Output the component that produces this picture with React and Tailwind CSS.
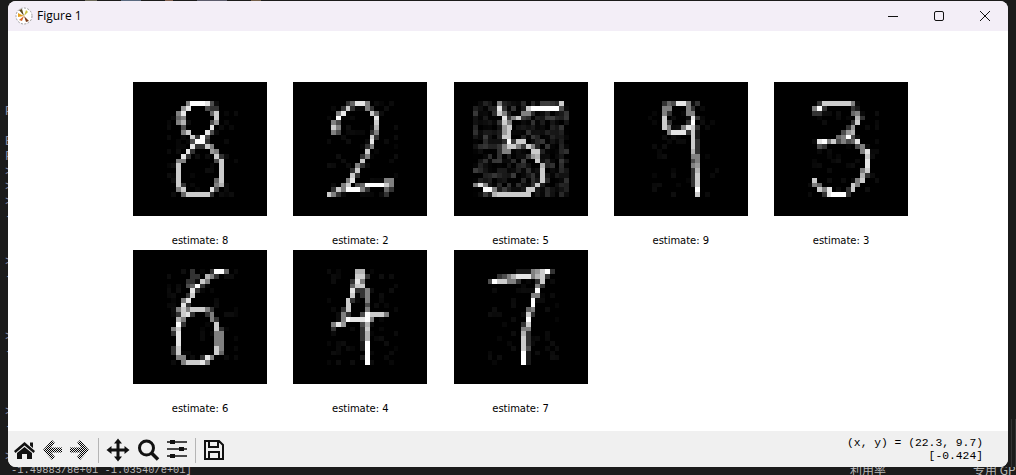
const digits = [
  {
    label: "8",
    rows: `4 11 5aaa97 16 3
5 10 6 11 9 15 3 16 2 17 2
6 9 5 10 9 16 4 17 8
7 9 4 10 5 17 8
8 9 5 10 7 16 3 17 6
9 10 3 16 9
10 10 5 11 8 15 9 16 3
11 12 8 13 2 14 a 15 3
12 12 3 13 a 14 a 15 2
13 12 9 13 2 14 2 15 8 16 5
14 11 9 12 2 16 6 17 5
15 10 9 11 2 17 8 18 2
16 9 5 10 5 17 3 18 8
17 9 8 18 8
18 9 8 18 8
19 9 8 18 8
20 9 8 17 4 18 8
21 9 8 10 2 17 5 18 7
22 9 5 10 8 16 9 17 3
23 10 4 11 88888 16 2`,
  },
  {
    label: "2",
    rows: `4 11 2 12 4 13 99 15 5
5 10 2 11 8 12 2 15 5 16 2
6 9 5 10 9 16 8 17 4
7 9 a 17 9
8 8 5 9 3 17 8
9 8 8 9 5 17 7
10 8 5 9 3 16 2 17 5
11 16 8 17 2
12 16 9
13 15 2 16 5
14 15 8
15 14 2 15 5
16 14 8
17 13 5 14 2
18 12 2 13 8
19 12 8 13 2
20 11 5 12 9 19 5 20 5
21 10 5 11 8 13 3 14 4 15 a 16 aa 18 a 19 8 20 5
22 8 2 9 8 10 5 11 aaa 14 5 15 2 19 4 20 2
23 7 8 8 5 9 2 19 2`,
  },
  {
    label: "5",
    rows: `4 9 5 22 8
5 9 9 15 8 16 aaaaaa 22 3
6 9 8 10 5 14 5 15 5
7 10 9 11 2 12 5 13 8
8 10 8 11 5
9 10 6 11 8
10 10 6 11 8
11 10 8 11 8
12 11 a 13 88
13 10 5 11 8 12 8 13 5 15 8 16 5
14 10 5 11 5 16 88
15 16 6 17 7
16 17 8
17 18 7
18 18 8
19 18 8
20 18 8
21 4 5 5 9 6 5 17 8
22 6 aa 8 5 15 88
23 8 78888888`,
  },
  {
    label: "9",
    rows: `4 10 2 11 4 12 3 13 99 15 5 17 2
5 10 5 11 5 15 5 16 2
6 10 5 11 2 15 5 16 5
7 10 8 16 9 17 2
8 10 8 11 2 15 2 16 a
9 10 8 11 5 14 5 15 9 16 8 17 2
10 11 5 12 999 15 2 16 8 17 1
11 16 8 17 1
12 16 8 17 2
13 16 8 17 2
14 16 7 17 2
15 16 5 17 5
16 16 3 17 5
17 16 5 17 6
18 16 2 17 7
19 16 2 17 8
20 16 2 17 8
21 16 2 17 8
22 17 a
23 17 8`,
  },
  {
    label: "3",
    rows: `4 9 2 10 8 11 88888 16 5
5 8 5 9 a 10 2 16 2 17 1
6 8 2 9 2 16 4 17 5
7 17 7 18 2
8 16 2 17 8
9 15 2 16 6
10 14 3 15 6 16 7
11 13 4 14 5 15 a 16 3
12 9 9 10 a 11 5 12 8 13 3 14 5 15 3 16 4 17 9
13 9 3 10 2 17 3 18 5
14 18 5 19 9
15 19 8
16 19 9
17 19 9
18 18 5 19 8
19 18 7 19 2
20 8 8 17 5 18 8
21 8 5 9 4 16 8 17 5
22 9 8 10 5 11 9 15 2 16 8
23 10 2 11 9 12 aaa 15 2`,
  },
  {
    label: "6",
    rows: `4 12 2 16 2 17 aa 19 4
5 12 2 13 2 15 7 16 5 17 2
6 11 2 12 2 14 8 15 5
7 11 3 12 4 13 a 14 2
8 12 9 13 2
9 11 2 12 8
10 10 5 11 9
11 10 9 11 2
12 9 5 10 8 11 5 12 888 15 5 16 2
13 9 2 10 8 11 9 12 2 15 2 16 5
14 9 7 10 5 16 5 17 2
15 9 a 10 2 17 8
16 8 5 9 8 17 8 18 2
17 8 2 9 9 17 5 18 5
18 9 9 17 5 18 5
19 9 9 17 5 18 5
20 8 2 9 8 17 8 18 5
21 8 2 9 8 17 8 18 4
22 9 5 10 5 14 2 15 9 16 5
23 10 5 11 888 14 9 15 5`,
  },
  {
    label: "4",
    rows: `4 13 77
5 13 88 15 2
6 12 2 13 9 14 5
7 12 4 13 8 14 8
8 12 9 13 2 14 2 15 5
9 12 8 14 2 15 5
10 11 8 12 2 15 5
11 11 8 15 3
12 10 2 11 8 15 5
13 10 5 11 2 14 3 15 a 16 888 19 5
14 10 5 11 a 12 999 15 a 16 5
15 8 5 9 9 10 6 14 3 15 7
16 8 2 14 2 15 8
17 14 2 15 7
18 14 2 15 7
19 14 1 15 a
20 14 1 15 a
21 15 a
22 14 1 15 a
23 15 a`,
  },
  {
    label: "7",
    rows: `4 13 111 16 5 17 6 18 8 19 a 20 2
5 9 2 10 3 11 5 12 7 13 999 16 5 17 7 18 8 19 2
6 7 3 8 a 9 88 11 5 12 5 13 2 17 2 18 8
7 17 5 18 2
8 17 a
9 16 5 17 5
10 16 a
11 16 a
12 15 4 16 5
13 15 8 16 2
14 15 a
15 14 2 15 8
16 14 5 15 5
17 14 7 15 2
18 14 8 15 2
19 14 8 15 2
20 14 8 15 3
21 14 a 15 1
22 14 a 15 1
23 14 a 15 1`,
  },
];

const leftFragments = ["P", "", "E", "F", ">", ">", ">", "-", "", "", ">", "-", "", "", "", ">", "-", "", "", "", ">", "-", "", ">"];

function parseRows(text) {
  const grid = {};
  text.split("\n").forEach((line) => {
    const parts = line.trim().split(" ");
    const row = Number(parts[0]);
    for (let i = 1; i < parts.length; i += 2) {
      [...parts[i + 1]].forEach((ch, n) => {
        grid[row + "-" + (Number(parts[i]) + n)] = parseInt(ch, 16) * 25.5;
      });
    }
  });
  return grid;
}

// faint reconstruction noise, heavy only on the "5"
function noiseAt(r, c, seed, noisy) {
  const s = Math.sin(r * 12.9898 + c * 78.233 + seed * 3.7) * 43758.5453;
  const h = s - Math.floor(s);
  if (noisy) {
    if (r < 4 || r > 23 || c < 4 || c > 23) return 0;
    return h * h * 62;
  }
  if (r < 4 || r > 23 || c < 7 || c > 21) return 0;
  return h > 0.8 ? 6 + (h - 0.8) * 40 : 0;
}

function Digit({ rows, seed }) {
  const grid = parseRows(rows);
  const cells = [];
  for (let r = 0; r < 28; r++) {
    for (let c = 0; c < 28; c++) {
      const v = Math.round(Math.max(grid[r + "-" + c] || 0, noiseAt(r, c, seed, seed === 2)));
      if (v > 0) cells.push(<rect key={r + "-" + c} x={c} y={r} width="1.02" height="1.02" fill={`rgb(${v},${v},${v})`} />);
    }
  }
  return (
    <svg viewBox="0 0 28 28" shapeRendering="crispEdges" className="block w-[134px] h-[134px] bg-black">
      {cells}
    </svg>
  );
}

function Logo() {
  return (
    <svg viewBox="0 0 18 18" className="w-[18px] h-[18px]">
      <circle cx="9" cy="9" r="8" fill="#fff" stroke="#888" strokeWidth="0.8" strokeDasharray="2 1.4" />
      <path d="M9 9 L4 3 L7 2 Z" fill="#5b4a1f" />
      <path d="M9 9 L3 6 L3 10 Z" fill="#e8a020" />
      <path d="M9 9 L4 13 L7 14 Z" fill="#d9662a" />
      <path d="M9 9 L13 5 L11 3 Z" fill="#c9c040" />
      <path d="M9 9 L14 14 L11 15 Z" fill="#7a3a18" />
    </svg>
  );
}

function DitherArrow({ id, flip }) {
  return (
    <svg viewBox="0 0 24 24" className="w-[24px] h-[24px]">
      <defs>
        <pattern id={id} width="2" height="2" patternUnits="userSpaceOnUse">
          <rect width="1" height="1" fill="#000" />
          <rect x="1" y="1" width="1" height="1" fill="#000" />
        </pattern>
      </defs>
      <path
        d="M3 12 L12 2 L15 5 L11 9.5 H22 V14.5 H11 L15 19 L12 22 Z"
        fill={`url(#${id})`}
        transform={flip ? "translate(24 0) scale(-1 1)" : undefined}
      />
    </svg>
  );
}

export default function App() {
  return (
    <div className="w-[1016px] h-[475px] bg-[#1b1b1b] flex flex-col overflow-hidden">
      <div className="h-px flex shrink-0 pl-[85px] gap-[24px]">
        <span className="w-[12px] bg-[#6d6a5a]" />
        <span className="w-[20px] bg-[#5a6a80]" />
        <span className="w-[8px] bg-[#80604f]" />
        <span className="w-[30px] bg-[#5c5c6c]" />
        <span className="w-[10px] bg-[#74604a]" />
      </div>

      <div className="flex flex-1 min-h-0">
        <div className="w-[8px] overflow-hidden pt-[103px] pl-[5px] text-[#8c8ca4] text-[13px] leading-[15px] font-['Liberation_Mono',monospace]">
          {leftFragments.map((t, i) => (
            <div key={i} className="h-[15px]">
              {t}
            </div>
          ))}
        </div>

        <div className="w-[1000px] flex flex-col rounded-t-lg rounded-b-lg overflow-hidden bg-white">
          <div className="h-[30px] bg-[#f3eef7] flex items-center pl-[7px] shrink-0">
            <Logo />
            <span className="ml-[4px] text-[12px] text-black font-['Open_Sans',sans-serif]">Figure 1</span>
            <div className="ml-auto flex items-center">
              <div className="w-[46px] h-[30px] flex items-center justify-center">
                <div className="w-[10px] h-px bg-[#111]" />
              </div>
              <div className="w-[46px] h-[30px] flex items-center justify-center">
                <div className="w-[10px] h-[10px] border border-[#111] rounded-[2px]" />
              </div>
              <div className="w-[46px] h-[30px] flex items-center justify-center">
                <svg viewBox="0 0 10 10" className="w-[10px] h-[10px]">
                  <path d="M0 0 L10 10 M10 0 L0 10" stroke="#111" strokeWidth="1" />
                </svg>
              </div>
            </div>
          </div>

          <div className="flex-1 pl-[125px] pt-[51px]">
            <div className="grid grid-cols-[repeat(5,134px)] gap-x-[26.25px]">
              {digits.map((d, i) => (
                <div key={d.label} className="h-[168px]">
                  <Digit rows={d.rows} seed={i} />
                  <p className="mt-[19px] text-center text-[10px] leading-[12px] tracking-[-0.05px] text-black font-['DejaVu_Sans',sans-serif]">
                    estimate: {d.label}
                  </p>
                </div>
              ))}
            </div>
          </div>

          <div className="h-[36px] bg-[#f0f0f0] flex items-center pl-[4px] pt-[2px] shrink-0">
            <svg viewBox="0 0 24 24" className="w-[24px] h-[24px]">
              <path d="M12.5 4 L23 13 L21.5 15 L12.5 7.5 L3.5 15 L2 13 Z M18 4.5 H21 V10 L18 7.5 Z" fill="#111" />
              <path d="M5 15 L12.5 9 L20 15 V21 H15 V16 H10 V21 H5 Z" fill="#111" />
            </svg>
            <div className="ml-[4px]">
              <DitherArrow id="dither-back" />
            </div>
            <div className="ml-[4px]">
              <DitherArrow id="dither-forward" flip />
            </div>
            <div className="ml-[6px] w-px h-[25px] bg-[#b4b4b4]" />
            <svg viewBox="0 0 24 24" className="ml-[7px] w-[24px] h-[24px]">
              <path d="M4 12 H20 M12 4 V20" stroke="#111" strokeWidth="3" />
              <path d="M12 0.5 L16 5.5 H8 Z M12 23.5 L16 18.5 H8 Z M0.5 12 L5.5 8 V16 Z M23.5 12 L18.5 8 V16 Z" fill="#111" />
            </svg>
            <svg viewBox="0 0 24 24" className="ml-[6px] w-[24px] h-[24px]">
              <circle cx="10.5" cy="10" r="7" fill="none" stroke="#111" strokeWidth="3" />
              <path d="M15.5 15 L22 21.5" stroke="#111" strokeWidth="3.5" />
            </svg>
            <svg viewBox="0 0 24 24" className="ml-[5px] w-[24px] h-[24px]">
              <path d="M2 4 H22 M2 11 H22 M2 18 H22" stroke="#111" strokeWidth="1.5" />
              <path d="M5 2 H10 V6 H5 Z M14 9 H19 V13 H14 Z M5 16 H10 V20 H5 Z" fill="#111" />
            </svg>
            <div className="ml-[6px] w-px h-[25px] bg-[#b4b4b4]" />
            <svg viewBox="0 0 24 24" className="ml-[5px] w-[24px] h-[24px]">
              <path d="M4 3 H18 L22 7 V21 H4 Z M8 3 V9 H17 V3 M8 21 V14 H18 V21" fill="none" stroke="#111" strokeWidth="2" />
            </svg>
            <div className="ml-auto pr-[25px] text-right text-[11.33px] leading-[13px] text-black whitespace-pre font-['Liberation_Mono',monospace]">
              <div>(x, y) = (22.3, 9.7)</div>
              <div>[-0.424]</div>
            </div>
          </div>
        </div>

        <div className="w-[8px] flex flex-col justify-end">
          <div className="h-[48px] bg-[repeating-linear-gradient(90deg,#1b1b1b_0,#1b1b1b_3px,#333_3px,#333_4px)]" />
        </div>
      </div>

      <div className="h-[8px] shrink-0 overflow-hidden flex items-start text-[#b8b8b8] text-[10.4px] leading-[12px] font-['Liberation_Mono',monospace]">
        <span className="ml-[11px] -mt-[3px] w-[839px] whitespace-pre">-1.49883/8e+01 -1.03540/e+01]</span>
        <span className="-mt-[3px] w-[123px] text-[12px] font-['Noto_Sans_CJK_SC',sans-serif]">利用率</span>
        <span className="-mt-[3px] text-[12px] whitespace-pre font-['Noto_Sans_CJK_SC',sans-serif]">专用 GP</span>
      </div>
    </div>
  );
}
